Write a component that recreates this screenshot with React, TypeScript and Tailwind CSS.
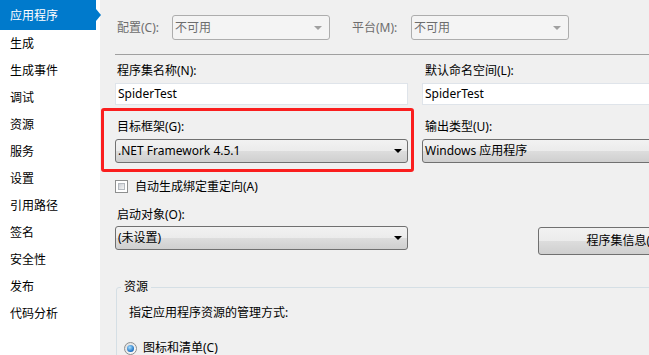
const navItems = [
  "生成",
  "生成事件",
  "调试",
  "资源",
  "服务",
  "设置",
  "引用路径",
  "签名",
  "安全性",
  "发布",
  "代码分析",
];

const Arrow = ({ disabled }: { disabled?: boolean }) => (
  <span
    className={
      disabled
        ? "h-0 w-0 border-x-[4px] border-t-[4px] border-x-transparent border-t-[#a0a0a0]"
        : "h-0 w-0 border-x-[4px] border-t-[4px] border-x-transparent border-t-black"
    }
  />
);

const Combo = ({ text, width }: { text: string; width: string }) => (
  <div
    className={`${width} flex h-[24px] items-center rounded-[3px] border border-[#707070] bg-[linear-gradient(to_bottom,#f2f2f2_0%,#ebebeb_50%,#dddddd_50%,#cfcfcf_100%)] pl-[2px] pr-[5px]`}
  >
    <span className="flex-1 whitespace-nowrap">{text}</span>
    <Arrow />
  </div>
);

const DisabledCombo = () => (
  <div className="flex h-[25px] w-[158px] items-center rounded-[3px] border border-[#adadad] bg-[#f4f4f4] pl-[2px] pr-[7px] text-[#6d6d6d]">
    <span className="flex-1">不可用</span>
    <Arrow disabled />
  </div>
);

const TextBox = ({ value, width }: { value: string; width: string }) => (
  <div
    className={`${width} flex h-[22px] items-center border border-[#dfe4ea] bg-white pl-[2px]`}
  >
    {value}
  </div>
);

export default function App() {
  return (
    <div className="flex h-[355px] w-[649px] overflow-hidden font-['Noto_Sans','Noto_Sans_CJK_SC',sans-serif] text-[12px] leading-[16px] text-black">
      {/* left nav */}
      <div className="w-[100px] shrink-0 bg-white">
        <div className="relative flex h-[30px] w-[96px] items-center bg-[#007acc] pl-[10px] pt-[2px] text-white">
          应用程序
          <span className="absolute left-full top-[9px] h-0 w-0 border-y-[6px] border-l-[5px] border-y-transparent border-l-[#007acc]" />
        </div>
        {navItems.map((item) => (
          <div key={item} className="flex h-[27px] items-center pl-[10px]">
            {item}
          </div>
        ))}
      </div>

      {/* page */}
      <div className="flex-1 overflow-hidden bg-[#f0f0f0] pl-[15px]">
        <div className="w-[720px]">
          <div className="mt-[15px] flex h-[25px] items-center text-[#6d6d6d]">
            <span className="w-[57px] pl-[2px]">配置(C):</span>
            <DisabledCombo />
            <span className="ml-[22px] w-[59px]">平台(M):</span>
            <DisabledCombo />
          </div>

          <div className="mt-[14px] h-px bg-[#a0a0a0]" />

          <div className="mt-[8px] flex">
            <div className="w-[293px]">
              <div className="pl-[2px]">程序集名称(N):</div>
              <div className="mt-[4px]">
                <TextBox value="SpiderTest" width="w-[293px]" />
              </div>
            </div>
            <div className="ml-[14px]">
              <div className="pl-[3px]">默认命名空间(L):</div>
              <div className="mt-[4px]">
                <TextBox value="SpiderTest" width="w-[260px]" />
              </div>
            </div>
          </div>

          <div className="mt-[3px] flex">
            <div className="-ml-[14px] w-[313px] rounded-[3px] border-[3px] border-[#fa1e1e] pb-[6px] pl-[11px] pr-[3px] pt-[8px]">
              <div className="pl-[2px]">目标框架(G):</div>
              <div className="mt-[4px]">
                <Combo text=".NET Framework 4.5.1" width="w-[293px]" />
              </div>
            </div>
            <div className="ml-[8px] pt-[11px]">
              <div className="pl-[3px]">输出类型(U):</div>
              <div className="mt-[4px]">
                <Combo text="Windows 应用程序" width="w-[260px]" />
              </div>
            </div>
          </div>

          <div className="mt-[8px] flex h-[13px] items-center">
            <div className="h-[13px] w-[13px] border border-[#8e8f8f] bg-white p-[2px]">
              <div className="h-full w-full border border-[#b4b9bf] bg-[linear-gradient(135deg,#cbcfd5,#f6f6f6)]" />
            </div>
            <span className="ml-[7px]">自动生成绑定重定向(A)</span>
          </div>

          <div className="mt-[14px] flex">
            <div className="w-[293px]">
              <div className="pl-[2px]">启动对象(O):</div>
              <div className="mt-[3px]">
                <Combo text="(未设置)" width="w-[293px]" />
              </div>
            </div>
            <div className="ml-[130px] mt-[20px] flex h-[28px] w-[178px] items-center justify-center whitespace-nowrap rounded-[3px] border border-[#707070] bg-[linear-gradient(to_bottom,#f2f2f2_0%,#ebebeb_50%,#dddddd_50%,#cfcfcf_100%)]">
              程序集信息(I)...
            </div>
          </div>

          <fieldset className="ml-[1px] mt-[24px] h-[120px] w-[600px] rounded-[3px] border border-[#d5dfe5]">
            <legend className="ml-[4px] px-[3px] leading-[16px]">资源</legend>
            <div className="ml-[12px] mt-[10px]">指定应用程序资源的管理方式:</div>
            <div className="ml-[7px] mt-[19px] flex items-center">
              <div className="flex h-[13px] w-[13px] items-center justify-center rounded-full border border-[#8e8f8f] bg-[linear-gradient(135deg,#dcdcdc,#ffffff)]">
                <div className="h-[7px] w-[7px] rounded-full bg-[radial-gradient(circle_at_40%_35%,#a8e0ff,#1b6fc1_70%,#0d3f87)]" />
              </div>
              <span className="ml-[6px]">图标和清单(C)</span>
            </div>
          </fieldset>
        </div>
      </div>
    </div>
  );
}
